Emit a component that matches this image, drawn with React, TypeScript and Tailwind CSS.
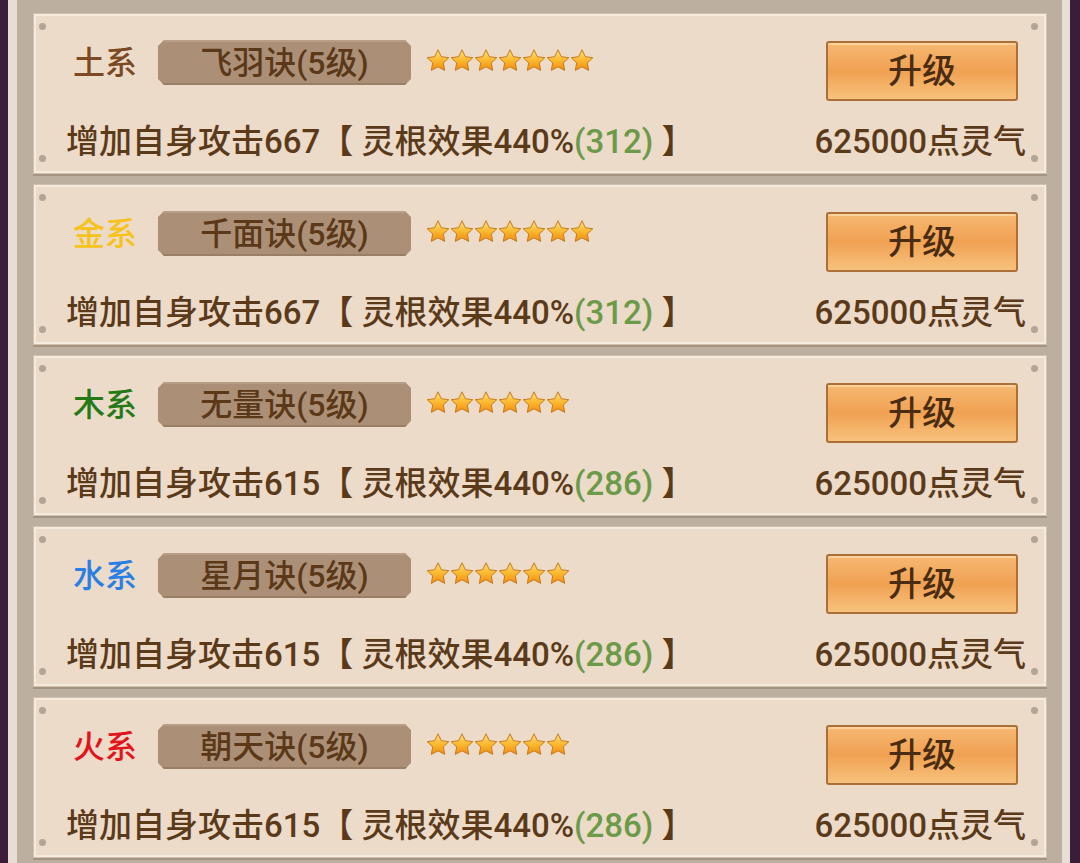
import type { ReactNode } from "react";

type Skill = {
  element: string;
  color: string;
  name: string;
  attack: number;
  bonus: number;
  stars: number;
};

const skills: Skill[] = [
  { element: "土系", color: "#7b4a22", name: "飞羽诀", attack: 667, bonus: 312, stars: 7 },
  { element: "金系", color: "#f6c21c", name: "千面诀", attack: 667, bonus: 312, stars: 7 },
  { element: "木系", color: "#257a17", name: "无量诀", attack: 615, bonus: 286, stars: 6 },
  { element: "水系", color: "#2a7fe4", name: "星月诀", attack: 615, bonus: 286, stars: 6 },
  { element: "火系", color: "#e2151d", name: "朝天诀", attack: 615, bonus: 286, stars: 6 },
];

const font = "font-['Roboto','Noto_Sans_CJK_SC',sans-serif]";

function Star() {
  return (
    <svg width="24" height="24" viewBox="0 0 24 24">
      <defs>
        <linearGradient id="starFill" x1="0" y1="0" x2="0" y2="1">
          <stop offset="0" stopColor="#ffe27a" />
          <stop offset="0.55" stopColor="#fbb52a" />
          <stop offset="1" stopColor="#f08a12" />
        </linearGradient>
      </defs>
      <path
        d="M12 0.8l3.3 6.9 7.5 1-5.5 5.2 1.4 7.5L12 17.8l-6.7 3.6 1.4-7.5L1.2 8.7l7.5-1z"
        fill="url(#starFill)"
        stroke="#c77a1c"
        strokeWidth="1"
        strokeLinejoin="round"
      />
    </svg>
  );
}

function Rivet({ className }: { className: string }) {
  return <span className={`absolute h-[7px] w-[7px] rounded-full bg-[#b2a596] ${className}`} />;
}

function Card({ skill }: { skill: Skill }) {
  return (
    <div className="relative flex h-[161px] flex-col border border-[#d2c0ab] bg-[#ecdbc9] shadow-[inset_0_0_0_2px_#f4eadd,0_2px_0_#a29383]">
      <Rivet className="left-[5px] top-[9px]" />
      <Rivet className="left-[5px] bottom-[11px]" />
      <Rivet className="right-[8px] top-[9px]" />
      <Rivet className="right-[8px] bottom-[11px]" />

      <div className="mt-[26px] flex items-start pl-[39px] pr-[28px]">
        <div className="flex h-[45px] w-[64px] items-center text-[32px] leading-none font-medium" style={{ color: skill.color }}>
          {skill.element}
        </div>
        <div className="ml-[21px] flex h-[45px] w-[253px] items-center justify-center bg-[#ab9077] text-[32px] leading-none font-medium text-[#5a3818] shadow-[inset_0_-2px_0_#9a7f67,inset_0_2px_0_#b89e86] [clip-path:polygon(6px_0,calc(100%-6px)_0,100%_6px,100%_calc(100%-6px),calc(100%-6px)_100%,6px_100%,0_calc(100%-6px),0_6px)]">
          {skill.name}(5级)
        </div>
        <div className="ml-[15px] mt-[9px] flex">
          {Array.from({ length: skill.stars }).map((_, i) => (
            <Star key={i} />
          ))}
        </div>
        <div className="flex-1" />
        <button
          type="button"
          className="relative mt-[1px] flex h-[60px] w-[192px] items-center justify-center rounded-[3px] border-2 border-[#ad6f38] bg-gradient-to-b from-[#f6b872] via-[#f0a152] to-[#f7c27c] text-[34px] leading-none font-medium text-[#4a2c12] shadow-[inset_0_2px_0_#fbd29c]"
        >
          升级
        </button>
      </div>

      <div className="mt-[24px] flex items-center justify-between pl-[32px] pr-[20px] text-[33px] leading-none font-medium text-[#5b3a1a]">
        <Row>
          增加自身攻击{skill.attack}【 灵根效果440%<span className="text-[#6b9a48]">({skill.bonus})</span> 】
        </Row>
        <span>625000点灵气</span>
      </div>
    </div>
  );
}

function Row({ children }: { children: ReactNode }) {
  return <span className="whitespace-pre">{children}</span>;
}

export default function App() {
  return (
    <div className={`flex h-[863px] w-full overflow-hidden bg-[#3a1d38] ${font}`}>
      <div className="w-[8px] bg-[#3a1d38]" />
      <div className="w-[9px] bg-[#e7ddd7]" />
      <div className="flex flex-1 flex-col gap-[10px] bg-[#bdaf9f] pl-[16px] pr-[15px] pt-[13px]">
        {skills.map((s) => (
          <Card key={s.name} skill={s} />
        ))}
      </div>
      <div className="w-[8px] bg-[#e7ddd7]" />
      <div className="w-[10px] bg-[#3a1d38]" />
    </div>
  );
}
